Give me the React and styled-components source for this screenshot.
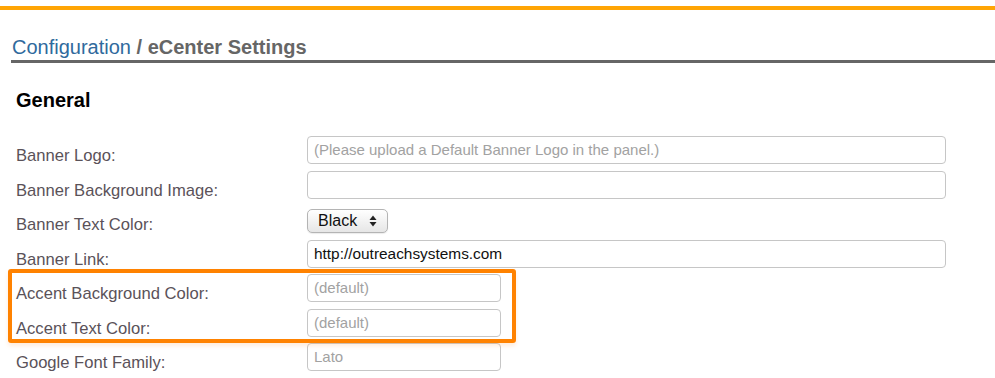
import React from 'react';
import styled, { createGlobalStyle } from 'styled-components';

const GlobalStyle = createGlobalStyle`
  body {
    margin: 0;
    background: #ffffff;
    font-family: "Liberation Sans", Arial, sans-serif;
  }
`;

const Page = styled.div`
  width: 995px;
  overflow: hidden;
`;

const TopBar = styled.div`
  margin-top: 6px;
  height: 4px;
  background: #ffa505;
`;

const Header = styled.h1`
  margin: 25px 0 0 11px;
  padding: 0 0 1px 1px;
  font-size: 20px;
  line-height: 24px;
  font-weight: normal;
  border-bottom: 3px solid #666666;
  color: #666666;
`;

const Crumb = styled.span`
  color: #2f6a9d;
`;

const Current = styled.span`
  font-weight: bold;
  color: #666666;
`;

const SectionTitle = styled.h2`
  margin: 25px 0 0 16px;
  font-size: 20px;
  line-height: 24px;
  font-weight: bold;
  color: #000000;
`;

const Form = styled.div`
  margin-top: 22px;
  padding-left: 16px;
`;

const Row = styled.div`
  display: grid;
  grid-template-columns: 291px auto;
  height: 34.5px;
  align-items: start;
`;

const Label = styled.label`
  padding-top: 12px;
  font-size: 16.6px;
  line-height: 20px;
  color: #5a5259;
  white-space: nowrap;
`;

const Input = styled.div`
  box-sizing: border-box;
  margin-top: 2px;
  width: ${(p) => (p.$wide ? '639px' : '194px')};
  height: 28px;
  padding: 0 6px;
  border: 1px solid #c6c6c6;
  border-radius: 4px;
  background: #ffffff;
  font-size: ${(p) => (p.$placeholder ? '15px' : '15.4px')};
  line-height: 26px;
  color: ${(p) => (p.$placeholder ? '#a2a2a2' : '#111111')};
  white-space: nowrap;
  overflow: hidden;
`;

const Select = styled.div`
  box-sizing: border-box;
  margin-top: 6px;
  width: 81px;
  height: 24px;
  display: flex;
  align-items: center;
  justify-content: space-between;
  padding: 0 10px 0 10px;
  border: 1px solid #b4b4b4;
  border-radius: 5px;
  background: linear-gradient(#ffffff, #e6e6e6);
  box-shadow: 0 1px 1px rgba(0, 0, 0, 0.08);
  font-size: 16px;
  color: #111111;
`;

const Highlight = styled.div`
  position: relative;

  &::before {
    content: '';
    position: absolute;
    left: -8px;
    top: -3px;
    width: 508px;
    height: 74px;
    box-sizing: border-box;
    border: 4px solid #ff8200;
    border-radius: 3px;
    box-shadow: 0 3px 4px rgba(255, 150, 60, 0.18);
    pointer-events: none;
  }
`;

const Arrows = () => (
  <svg width="8" height="12" viewBox="0 0 8 12">
    <path d="M4 0.5 L7.5 5 H0.5 Z" fill="#222" />
    <path d="M4 11.5 L7.5 7 H0.5 Z" fill="#222" />
  </svg>
);

const Field = ({ label, children }) => (
  <Row>
    <Label>{label}</Label>
    {children}
  </Row>
);

const App = () => {
  return (
    <Page>
      <GlobalStyle />
      <TopBar />
      <Header>
        <Crumb>Configuration</Crumb> <Current>/ eCenter Settings</Current>
      </Header>
      <SectionTitle>General</SectionTitle>
      <Form>
        <Field label="Banner Logo:">
          <Input $wide $placeholder>(Please upload a Default Banner Logo in the panel.)</Input>
        </Field>
        <Field label="Banner Background Image:">
          <Input $wide />
        </Field>
        <Field label="Banner Text Color:">
          <Select>
            Black
            <Arrows />
          </Select>
        </Field>
        <Field label="Banner Link:">
          <Input $wide>http://outreachsystems.com</Input>
        </Field>
        <Highlight>
          <Field label="Accent Background Color:">
            <Input $placeholder>(default)</Input>
          </Field>
          <Field label="Accent Text Color:">
            <Input $placeholder>(default)</Input>
          </Field>
        </Highlight>
        <Field label="Google Font Family:">
          <Input $placeholder>Lato</Input>
        </Field>
      </Form>
    </Page>
  );
};

export default App;
